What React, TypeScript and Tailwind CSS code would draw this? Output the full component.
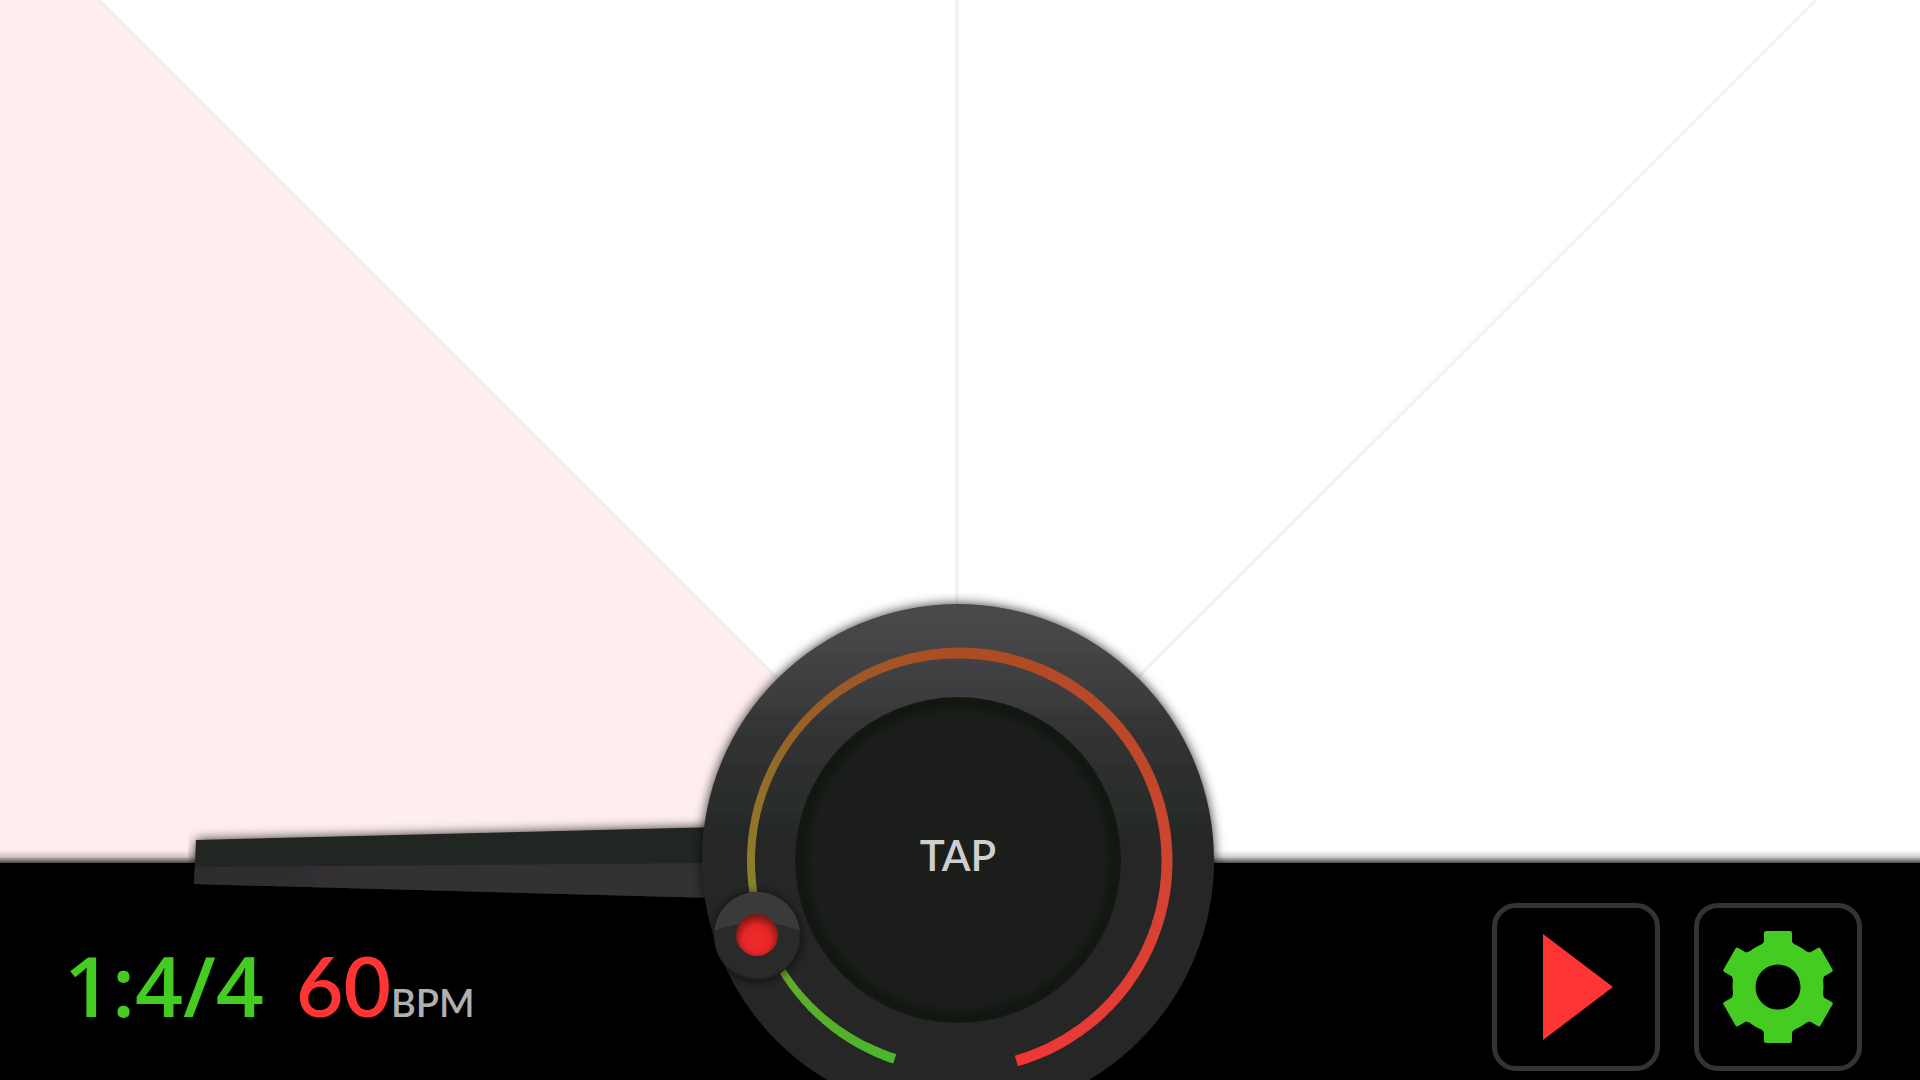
import React, { useState } from "react";

const STOPS: { at: number; rgb: [number, number, number]; width: number }[] = [
    { at: 0, rgb: [72, 184, 42], width: 10 },
    { at: 0.12, rgb: [98, 170, 42], width: 7 },
    { at: 0.22, rgb: [142, 124, 44], width: 8 },
    { at: 0.35, rgb: [152, 96, 40], width: 8 },
    { at: 0.5, rgb: [172, 76, 34], width: 11 },
    { at: 0.68, rgb: [190, 72, 42], width: 11 },
    { at: 0.82, rgb: [214, 66, 52], width: 11 },
    { at: 1, rgb: [242, 54, 54], width: 11 },
];

const ARC_START = 108;
const ARC_SWEEP = 326;
const ARC_RADIUS = 208;
const ARC_STEPS = 120;

const arcPoint = (deg: number) => {
    const rad = (deg * Math.PI) / 180;
    return `${(Math.cos(rad) * ARC_RADIUS).toFixed(2)} ${(Math.sin(rad) * ARC_RADIUS).toFixed(2)}`;
};

const sample = (t: number) => {
    const i = Math.max(1, STOPS.findIndex((s) => s.at >= t));
    const a = STOPS[i - 1];
    const b = STOPS[i];
    const k = (t - a.at) / (b.at - a.at);
    const rgb = a.rgb.map((v, n) => Math.round(v + (b.rgb[n] - v) * k));
    return { color: `rgb(${rgb.join(",")})`, width: a.width + (b.width - a.width) * k };
};

const TempoArc: React.FC<{}> = () => (
    <g fill="none" transform="translate(1 0)">
        {Array.from({ length: ARC_STEPS }, (_, i) => {
            const from = ARC_START + (i / ARC_STEPS) * ARC_SWEEP;
            const to = Math.min(from + ARC_SWEEP / ARC_STEPS + 0.4, ARC_START + ARC_SWEEP);
            const { color, width } = sample((i + 0.5) / ARC_STEPS);
            return (
                <path
                    key={i}
                    d={`M${arcPoint(from)}A${ARC_RADIUS} ${ARC_RADIUS} 0 0 1 ${arcPoint(to)}`}
                    stroke={color}
                    strokeWidth={width}
                />
            );
        })}
    </g>
);

const Beats: React.FC<{}> = () => (
    <svg className="block h-full w-full" viewBox="0 0 1920 863" preserveAspectRatio="xMidYMax slice" aria-hidden="true">
        <defs>
            <linearGradient id="horizon" x1="0" y1="0" x2="0" y2="1">
                <stop offset="0" stopColor="#000" stopOpacity="0" />
                <stop offset="0.5" stopColor="#000" stopOpacity="0.17" />
                <stop offset="1" stopColor="#000" stopOpacity="0.7" />
            </linearGradient>
        </defs>
        <path d="M-762 -860L956 858V863H-762Z" fill="#ffeeee" />
        <g stroke="#f2f2f2" strokeWidth="3">
            <path d="M99 0L957 858" stroke="#f4edec" />
            <path d="M957 0V860" />
            <path d="M1816 0L957 858" />
        </g>
        <rect x="-960" y="850" width="3840" height="13" fill="url(#horizon)" />
    </svg>
);

const Dial: React.FC<{}> = () => (
    <svg className="block" width="1540" height="490" viewBox="-770 -271 1540 490" aria-hidden="true">
        <defs>
            <linearGradient id="face" x1="0" y1="0" x2="0" y2="1">
                <stop offset="0" stopColor="#4a4a4a" />
                <stop offset="0.09" stopColor="#444446" />
                <stop offset="0.19" stopColor="#3b3c3d" />
                <stop offset="0.22" stopColor="#373638" />
                <stop offset="0.26" stopColor="#303331" />
                <stop offset="0.33" stopColor="#2f2e2f" />
                <stop offset="0.4" stopColor="#292d2a" />
                <stop offset="0.43" stopColor="#282928" />
                <stop offset="0.46" stopColor="#282828" />
                <stop offset="1" stopColor="#282828" />
            </linearGradient>
            <radialGradient id="well">
                <stop offset="0" stopColor="#1c1e1b" />
                <stop offset="0.89" stopColor="#1b1d1a" />
                <stop offset="0.97" stopColor="#111611" />
                <stop offset="1" stopColor="#141813" />
            </radialGradient>
            <linearGradient id="armLight" x1="0" y1="0" x2="1" y2="0">
                <stop offset="0" stopColor="#2c2d2c" />
                <stop offset="0.3" stopColor="#313032" />
                <stop offset="1" stopColor="#303330" />
            </linearGradient>
            <radialGradient id="lamp" cx="0.5" cy="0.6" r="0.55">
                <stop offset="0" stopColor="#f32a2a" />
                <stop offset="0.6" stopColor="#e42626" />
                <stop offset="1" stopColor="#841717" />
            </radialGradient>
            <filter id="soft" x="-20%" y="-50%" width="140%" height="200%">
                <feDropShadow dx="0" dy="0" stdDeviation="6" floodColor="#000" floodOpacity="0.8" />
            </filter>
            <clipPath id="knobTop">
                <path d="M-46 -46H46V-3Q0 -22 -46 -3Z" />
            </clipPath>
        </defs>

        {/* Pendulum arm */}
        <g filter="url(#soft)">
            <path d="M-762 -21L-240 -34V37L-764 23Z" fill="#222522" />
            <path d="M-763 6L-240 2V37L-764 23Z" fill="url(#armLight)" />
        </g>

        <circle r="256" cy="-1" fill="url(#face)" filter="url(#soft)" />
        <TempoArc />
        <circle r="163" cy="-1" fill="url(#well)" />

        {/* Tempo handle */}
        <g transform="translate(-201 74)">
            <circle r="43" cy="2" fill="#202020" filter="url(#soft)" />
            <circle r="43" fill="#2a2a2a" />
            <circle r="43" fill="#3a3a3a" clipPath="url(#knobTop)" />
            <circle r="21" fill="url(#lamp)" />
        </g>
    </svg>
);

const PlayIcon: React.FC<{}> = () => (
    <svg width="70" height="108" viewBox="0 0 70 108" aria-hidden="true">
        <path d="M0 1L70 54L0 107Z" fill="#ff3535" />
    </svg>
);

const StopIcon: React.FC<{}> = () => (
    <svg width="72" height="72" viewBox="0 0 72 72" aria-hidden="true">
        <rect width="72" height="72" fill="#ff3535" />
    </svg>
);

const GearIcon: React.FC<{}> = () => (
    <svg width="116" height="116" viewBox="-58 -58 116 116" aria-hidden="true">
        <g fill="#44cc22">
            {[0, 60, 120, 180, 240, 300].map((deg) => (
                <path key={deg} d="M-20 -39L-14 -45L-14 -54Q-14 -56 -12 -56H12Q14 -56 14 -54L14 -45L20 -39Z" transform={`rotate(${deg})`} />
            ))}
        </g>
        <circle r="34" fill="none" stroke="#44cc22" strokeWidth="23" />
    </svg>
);

const App: React.FC<{}> = () => {
    const [playing, setPlaying] = useState(false);

    return (
        <main className="relative flex h-screen flex-col overflow-hidden bg-white font-[Lato,sans-serif]">
            <section className="min-h-0 flex-1">
                <Beats />
            </section>

            <footer className="flex shrink-0 items-start justify-between bg-black pt-10 pr-[58px] pb-[9px] pl-16">
                <div className="flex items-baseline pt-[30px] leading-[104px]">
                    <span className="font-['Open_Sans',sans-serif] text-[84px] font-semibold text-[#44cc22]">1:4/4</span>
                    <span className="ml-8 text-[82px] font-semibold text-[#ff3535]">60</span>
                    <span className="text-[38px] font-semibold text-[#b0b0b0]">BPM</span>
                </div>
                <div className="flex gap-[34px]">
                    <button
                        type="button"
                        aria-label={playing ? "Stop" : "Play"}
                        onClick={() => setPlaying(!playing)}
                        className="flex size-[168px] items-center justify-center rounded-3xl border-[5px] border-[#333333] pl-1"
                    >
                        {playing ? <StopIcon /> : <PlayIcon />}
                    </button>
                    <button
                        type="button"
                        aria-label="Settings"
                        className="flex size-[168px] items-center justify-center rounded-3xl border-[5px] border-[#333333]"
                    >
                        <GearIcon />
                    </button>
                </div>
            </footer>

            {/* Dial hangs over the horizon */}
            <div className="pointer-events-none absolute inset-x-0 bottom-0 flex justify-center pr-1">
                <Dial />
            </div>
            <div className="pointer-events-none absolute inset-x-0 bottom-14 flex justify-center pr-1">
                <button
                    type="button"
                    className="pointer-events-auto size-[326px] rounded-full pb-3 text-[42px] font-semibold text-[#cfcfcf]"
                >
                    TAP
                </button>
            </div>
        </main>
    );
};

export default App;
